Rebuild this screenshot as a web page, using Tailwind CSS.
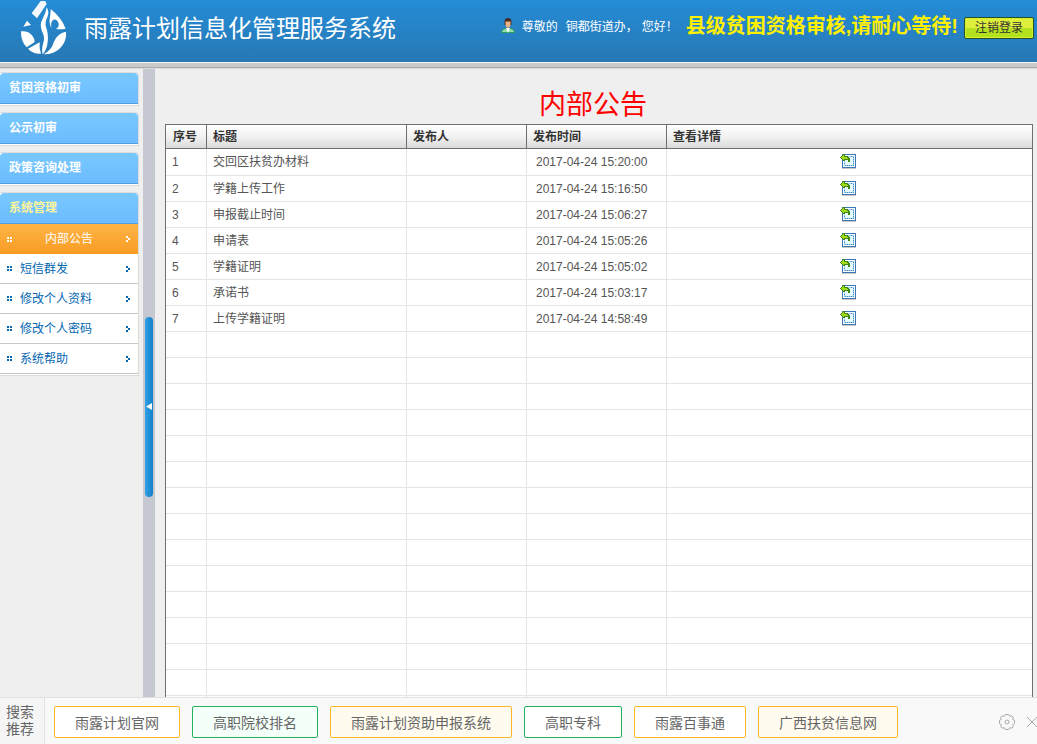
<!DOCTYPE html>
<html lang="zh-CN">
<head>
<meta charset="utf-8">
<meta name="viewport" content="width=device-width, initial-scale=1">
<title>雨露计划信息化管理服务系统</title>
<script src="https://cdn.jsdelivr.net/npm/@tailwindcss/browser@4"></script>
</head>
<body class="flex h-screen flex-col overflow-hidden bg-[#efefef] font-['Liberation_Sans','Noto_Sans_CJK_SC',sans-serif] text-xs text-[#555]">

<svg class="hidden" aria-hidden="true">
  <symbol id="dots" viewBox="0 0 5 5"><path fill="currentColor" d="M0 0h2v2H0zM3 0h2v2H3zM0 3h2v2H0zM3 3h2v2H3z"/></symbol>
  <symbol id="arrow" viewBox="0 0 4 6" shape-rendering="crispEdges"><path fill="currentColor" d="M0 0h2v2H0zM2 2h2v2H2zM0 4h2v2H0z"/></symbol>
  <symbol id="detail" viewBox="0 0 16 16" shape-rendering="crispEdges">
    <path fill="#c9c9c4" d="M2 14h14v1H2z"/>
    <path fill="#3c78b8" d="M2 0h14v14H2z"/>
    <path fill="#fff" d="M3 1h12v12H3z"/>
    <path fill="#9fd0f0" d="M4 2h10v10H4z"/>
    <path fill="#e4fbff" d="M5 3h8v8H5z"/>
    <path fill="#3d8fc8" d="M5 11h1v1H5zM7 11h1v1H7zM9 11h1v1H9zM11 11h1v1h-1zM13 9h1v1h-1zM13 7h1v1h-1zM13 5h1v1h-1zM13 3h1v1h-1zM11 2h1v1h-1zM4 9h1v1H4zM13 11h1v1h-1z"/>
    <path fill="#3f8710" d="M0 3h1V2h1V1h1V0h2v2h3v1h1v1h1v4H8V6H5v1H3V6H2V5H1V4H0z"/>
    <path fill="#a4dc1c" d="M1 3h1V2h1V1h1v2h3v1h1v1H4v1H3V5H2V4H1z"/>
  </symbol>
</svg>

<header class="flex h-[62px] shrink-0 items-start justify-between bg-linear-to-b from-[#248cd7] to-[#2778b3]">
  <div class="flex items-center pl-5">
    <svg class="h-[56px] w-12" viewBox="30 0 144 168" fill="#fff" aria-hidden="true">
      <path d="M92 0h14l4 9-29 43-16-15z" opacity=".94"/>
      <path d="M51 59l-11 18 23-5z"/>
      <path d="M33 91q22-2 34 13 9 12 6 20l-23 15Q32 121 33 91z"/>
      <path d="M54 143l35-19q-2 17 4 34Q70 160 54 143z"/>
      <path d="M110 19q8 12 3 27-9 18-5 32 8 22 5 45-2 22-15 37-4-16 2-35 6-15-4-34-8-21 2-38 9-15 12-34z"/>
      <path d="M122 24q33 26 45 59-19 3-29 0 9-3 8-15-5-15-16-12-9 5-6 26-8-17-4-34 2-12 2-24z"/>
      <path d="M168 92q3 30-20 52-20 17-47 16 25-14 30-36 10-27 37-32z"/>
    </svg>
    <h1 class="pt-px pl-4 text-2xl leading-[56px] whitespace-nowrap text-white">雨露计划信息化管理服务系统</h1>
  </div>
  <div class="flex items-center pt-2 pr-[3px] whitespace-nowrap text-white">
    <svg class="mr-[7px] h-4 w-[14px]" viewBox="0 0 14 16" aria-hidden="true">
      <path fill="#2f9d62" d="M0 15q0-4 4-5h6q4 1 4 5z"/>
      <path fill="#8fe0ae" d="M1 14q1-3 4-3l2 2 2-2q3 0 4 3z"/>
      <path fill="#fff" d="M5 10h4l-2 5z"/>
      <path fill="#4a2a20" d="M3.500 4q0-4 3.500-4t3.500 4v3h-7z"/>
      <path fill="#e9b184" d="M4.500 3.500h5V7Q9 9.500 7 10 5 9.500 4.500 7z"/>
    </svg>
    <span class="pt-0.5">尊敬的</span>
    <span class="pt-0.5 pl-2">铜都街道办，</span>
    <span class="pt-0.5 pl-1">您好！</span>
    <strong class="pl-2 text-xl leading-9 text-[#fff000]">县级贫困资格审核,请耐心等待!</strong>
    <button type="button" class="mt-1 ml-[6px] h-[22px] w-[70px] rounded-xs border border-[#24502e] bg-linear-to-b from-[#def03c] from-50% to-[#b4e11e] to-50% text-xs leading-5 text-[#333] shadow-[inset_0_0_0_1px_#d6ee2c]">注销登录</button>
  </div>
</header>
<div class="h-[6px] shrink-0 border-t border-b border-t-[#f4f4f4] border-b-[#a9a9a9] bg-[#cacaca]"></div>

<div class="flex min-h-0 flex-1 border-t border-[#dcdcdc]">
  <nav class="flex w-[143px] shrink-0 flex-col gap-[6px] pt-[3px] pr-1">
    <section class="rounded-tr-sm border border-l-0 border-[#dcdcdc] bg-white pb-px">
      <button type="button" class="block h-[31px] w-full rounded-t-sm border-b border-[#4b9fe4] bg-linear-to-b from-[#78c8ff] to-[#6cbcff] pl-[9px] text-left font-bold text-white">贫困资格初审</button>
    </section>
    <section class="rounded-tr-sm border border-l-0 border-[#dcdcdc] bg-white pb-px">
      <button type="button" class="block h-[31px] w-full rounded-t-sm border-b border-[#4b9fe4] bg-linear-to-b from-[#78c8ff] to-[#6cbcff] pl-[9px] text-left font-bold text-white">公示初审</button>
    </section>
    <section class="rounded-tr-sm border border-l-0 border-[#dcdcdc] bg-white pb-px">
      <button type="button" class="block h-[31px] w-full rounded-t-sm border-b border-[#4b9fe4] bg-linear-to-b from-[#78c8ff] to-[#6cbcff] pl-[9px] text-left font-bold text-white">政策咨询处理</button>
    </section>
    <section class="rounded-tr-sm border border-l-0 border-[#dcdcdc] bg-white pb-px">
      <button type="button" class="block h-[31px] w-full rounded-t-sm border-b border-[#4b9fe4] bg-linear-to-b from-[#78c8ff] to-[#6cbcff] pl-[9px] text-left font-bold text-[#fff59a]">系统管理</button>
      <ul class="text-[#0467b1]">
        <li><a href="#" class="flex h-[30px] items-center bg-linear-to-b from-[#fdb444] to-[#f99c22] pr-2 pl-[7px] text-white"><svg class="h-[5px] w-[5px]"><use href="#dots"/></svg><span class="flex-1 text-center">内部公告</span><svg class="h-[6px] w-1"><use href="#arrow"/></svg></a></li>
        <li><a href="#" class="flex h-[30px] items-center border-b border-[#c9c9c9] pr-2 pl-[7px]"><svg class="h-[5px] w-[5px]"><use href="#dots"/></svg><span class="flex-1 pl-2">短信群发</span><svg class="h-[6px] w-1"><use href="#arrow"/></svg></a></li>
        <li><a href="#" class="flex h-[30px] items-center border-b border-[#c9c9c9] pr-2 pl-[7px]"><svg class="h-[5px] w-[5px]"><use href="#dots"/></svg><span class="flex-1 pl-2">修改个人资料</span><svg class="h-[6px] w-1"><use href="#arrow"/></svg></a></li>
        <li><a href="#" class="flex h-[30px] items-center border-b border-[#c9c9c9] pr-2 pl-[7px]"><svg class="h-[5px] w-[5px]"><use href="#dots"/></svg><span class="flex-1 pl-2">修改个人密码</span><svg class="h-[6px] w-1"><use href="#arrow"/></svg></a></li>
        <li><a href="#" class="flex h-[30px] items-center border-b border-[#c9c9c9] pr-2 pl-[7px]"><svg class="h-[5px] w-[5px]"><use href="#dots"/></svg><span class="flex-1 pl-2">系统帮助</span><svg class="h-[6px] w-1"><use href="#arrow"/></svg></a></li>
      </ul>
    </section>
  </nav>

  <div class="flex w-3 shrink-0 items-center justify-center bg-[#c5c8d1]">
    <button type="button" aria-label="收起菜单" class="flex h-[180px] w-2 items-center justify-center rounded-sm bg-linear-to-r from-[#31a1e6] to-[#1180c8]">
      <svg class="h-[7px] w-[6px]" viewBox="0 0 6 7"><path fill="#fff" d="M6 0v7L0 3.500z"/></svg>
    </button>
  </div>

  <main class="min-w-0 flex-1 overflow-hidden pr-1 pl-[10px]">
    <h2 class="h-[55px] pt-4 pr-3 text-center text-[27px] leading-10 text-[#f00]">内部公告</h2>
    <table class="w-full table-fixed border-separate border-spacing-0 border border-[#6f6f6f] bg-white">
      <colgroup><col class="w-[41px]"><col class="w-[200px]"><col class="w-[120px]"><col class="w-[140px]"><col></colgroup>
      <thead class="text-left text-[#333]">
        <tr class="h-6 bg-linear-to-b from-white via-[#f1f1f1] to-[#d8d8d8]">
          <th class="border-r border-b border-[#6f6f6f] py-0 pl-[7px]">序号</th>
          <th class="border-r border-b border-[#6f6f6f] py-0 pl-[6px]">标题</th>
          <th class="border-r border-b border-[#6f6f6f] py-0 pl-[6px]">发布人</th>
          <th class="border-r border-b border-[#6f6f6f] py-0 pl-[6px]">发布时间</th>
          <th class="border-b border-[#6f6f6f] py-0 pl-[6px]">查看详情</th>
        </tr>
      </thead>
      <tbody id="rows"></tbody>
    </table>
  </main>
</div>

<footer class="fixed inset-x-0 bottom-0 flex h-[47px] border-t border-[#e2e2e2] bg-[#f9f9f9] text-sm whitespace-nowrap text-[#666]">
  <div class="flex w-[45px] shrink-0 items-center border-r border-[#e2e2e2] bg-[#f5f5f5] pl-[6px] leading-[17px]"><p>搜索<br>推荐</p></div>
  <div class="flex flex-1 items-center gap-3 pt-px pl-[9px]">
    <a href="#" class="h-8 rounded-xs border border-[#fbb824] bg-white px-5 leading-8">雨露计划官网</a>
    <a href="#" class="h-8 rounded-xs border border-[#22b35e] bg-[#f4fff9] px-5 leading-8">高职院校排名</a>
    <a href="#" class="h-8 rounded-xs border border-[#fbb824] bg-[#fffbee] px-5 leading-8">雨露计划资助申报系统</a>
    <a href="#" class="h-8 rounded-xs border border-[#22b35e] bg-white px-5 leading-8">高职专科</a>
    <a href="#" class="h-8 rounded-xs border border-[#fbb824] bg-white px-5 leading-8">雨露百事通</a>
    <a href="#" class="h-8 rounded-xs border border-[#fbb824] bg-[#fffbee] px-5 leading-8">广西扶贫信息网</a>
  </div>
  <div class="flex shrink-0 items-center gap-3 pt-px text-[#aaa]">
    <button type="button" aria-label="设置"><svg class="block h-4 w-4" viewBox="0 0 16 16" fill="none" stroke="currentColor" stroke-linejoin="round"><path d="M6.300.500h3.400l.8 1.700 2.400-.3 1.300 1.300-.4 2.300 1.700.9v3.200l-1.700.9.400 2.300-1.300 1.300-2.400-.3-.8 1.700H6.300l-.8-1.700-2.400.3-1.300-1.300.4-2.300L.500 9.600V6.400l1.700-.9-.4-2.300 1.300-1.300 2.400.3z"/><circle cx="8" cy="8" r="2"/></svg></button>
    <button type="button" aria-label="关闭"><svg class="block h-[10px] w-[10px]" viewBox="0 0 10 10" stroke="currentColor"><path d="M0 0l10 10M10 0L0 10"/></svg></button>
  </div>
</footer>

<script>
const notices = [
  ['交回区扶贫办材料', '2017-04-24 15:20:00'],
  ['学籍上传工作', '2017-04-24 15:16:50'],
  ['申报截止时间', '2017-04-24 15:06:27'],
  ['申请表', '2017-04-24 15:05:26'],
  ['学籍证明', '2017-04-24 15:05:02'],
  ['承诺书', '2017-04-24 15:03:17'],
  ['上传学籍证明', '2017-04-24 14:58:49']
];
const cell = 'border-r border-b border-[#e5e5e5] py-0 pl-[6px]';
let html = '';
for (let i = 0; i < 24; i++) {
  const n = notices[i];
  html += `<tr class="h-[26px] first:h-[27px]">
    <td class="${cell}">${n ? i + 1 : ''}</td>
    <td class="${cell}">${n ? n[0] : ''}</td>
    <td class="${cell}"></td>
    <td class="${cell}"><span class="pl-[3px]">${n ? n[1] : ''}</span></td>
    <td class="border-b border-[#e5e5e5] py-0 pr-1 pl-0">${n ? '<a href="#" aria-label="查看详情" class="mx-auto block h-4 w-4"><svg class="block h-4 w-4"><use href="#detail"/></svg></a>' : ''}</td>
  </tr>`;
}
document.getElementById('rows').innerHTML = html;
</script>
</body>
</html>
